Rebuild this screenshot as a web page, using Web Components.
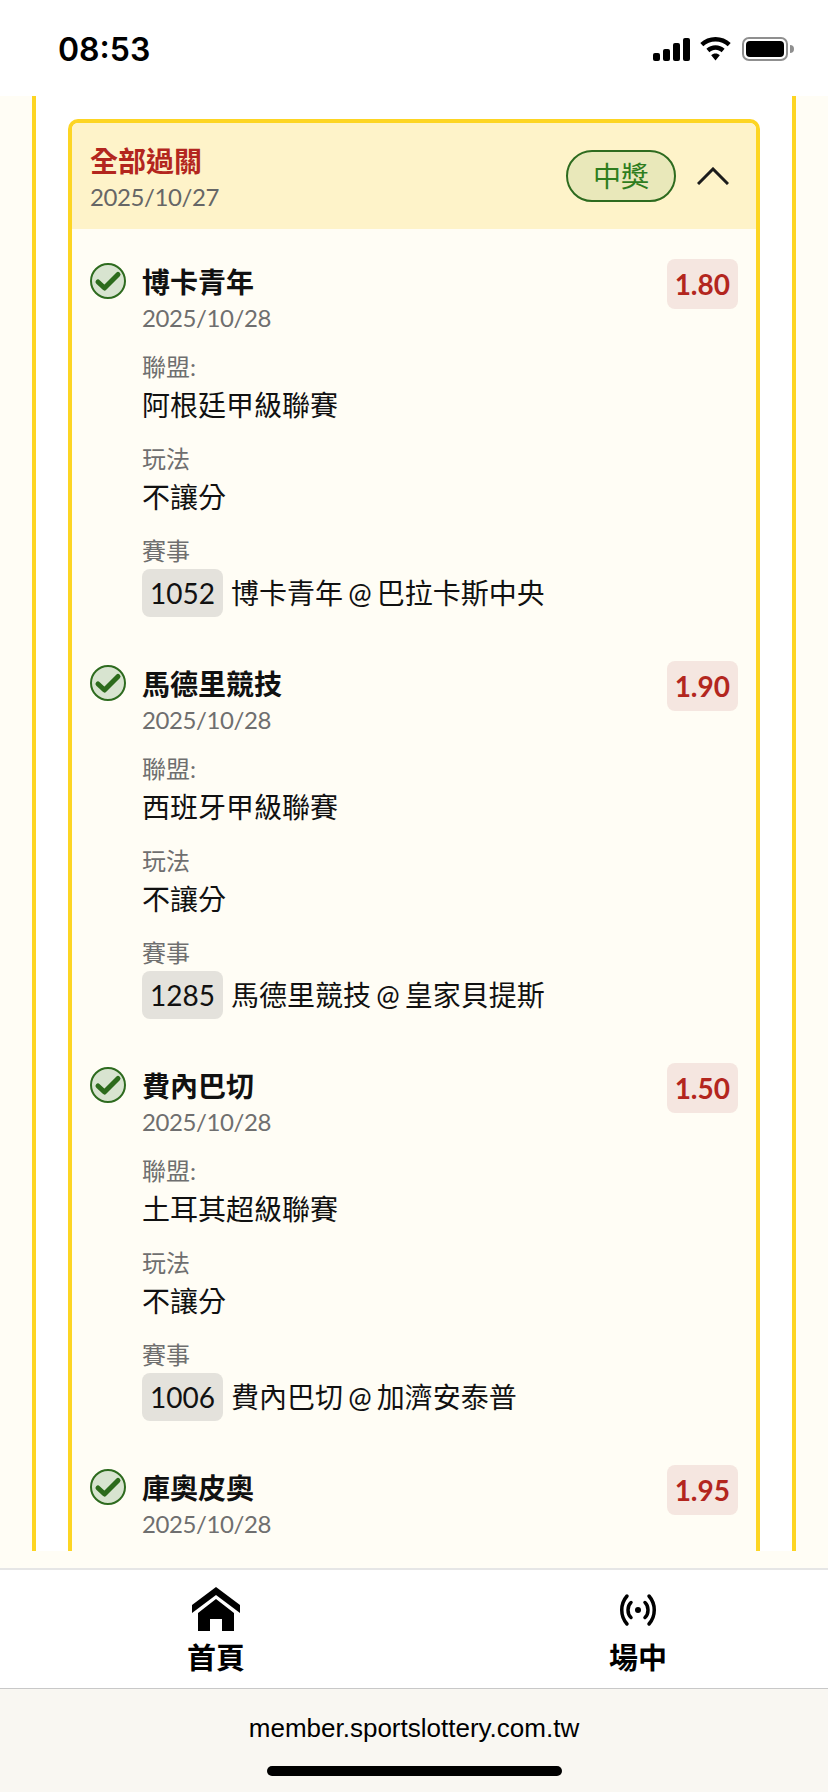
<!DOCTYPE html>
<html lang="zh-Hant"><head><meta charset="utf-8"><title>全部過關</title>
<style>
html,body{margin:0;padding:0}
body{width:828px;height:1792px;overflow:hidden;font-family:Lato,"Noto Sans CJK TC",sans-serif;color:#111;background:#fff}
app-shell{height:1792px}
</style></head><body>
<template id="t-shell"><style>:host{display:flex;flex-direction:column;width:828px}
main{flex:1;min-height:0;background:#fffdf5;display:flex;flex-direction:column;padding:0 32px 17px}
.panel{flex:1;min-height:0;overflow:hidden;background:#fff;border:solid #fdd523;border-width:0 4px;padding:23px 32px 0}
</style><status-bar></status-bar><main><div class="panel"><slot></slot></div></main><bottom-nav></bottom-nav><browser-bar></browser-bar></template>

<template id="t-status"><style>:host{display:flex;flex:none;height:96px;background:#fff;align-items:flex-start;justify-content:space-between;box-sizing:border-box;padding:31px 34px 0 58px}
.time{font:600 32px/38px Inter,sans-serif;color:#000;letter-spacing:0}
.icons{display:flex;align-items:center;gap:10px;margin-top:6px;height:24px}
svg{display:block}
.sig{display:flex;align-items:flex-end;gap:3px;height:23px}
.sig i{display:block;width:7px;background:#000;border-radius:2px}
.bat{display:flex;align-items:center;margin-left:1px}
.shell{box-sizing:border-box;width:46px;height:24px;border:2px solid #8f8f8f;border-radius:7px;padding:2px}
.fill{height:100%;background:#000;border-radius:4px}
.cap{width:4px;height:8px;background:#8f8f8f;border-radius:0 4px 4px 0;margin-left:2px}
</style><span class="time">08:53</span><div class="icons">
<div class="sig"><i style="height:8px"></i><i style="height:12px"></i><i style="height:18px"></i><i style="height:23px"></i></div>
<svg width="31" height="24" viewBox="0 0 31 24"><path d="M15.5 0C9.6 0 4.3 2.2.3 5.9l3 3.4c3.2-3 7.5-4.8 12.2-4.8s9 1.800 12.200 4.800l3-3.400C26.700 2.200 21.400 0 15.500 0zM15.500 8.200c-3.500 0-6.700 1.300-9.100 3.600l3 3.400c1.600-1.500 3.800-2.400 6.100-2.400s4.500.9 6.100 2.400l3-3.400c-2.400-2.300-5.600-3.600-9.100-3.600zM15.500 16.500c-1.700 0-3.200.6-4.300 1.700l4.300 5.300 4.300-5.300c-1.100-1.100-2.600-1.700-4.300-1.700z" fill="#000"/></svg>
<div class="bat"><div class="shell"><div class="fill"></div></div><div class="cap"></div></div>
</div></template>

<template id="t-card"><style>:host{display:block;box-sizing:border-box;width:692px;border:4px solid #fdd523;border-bottom:0;border-radius:10px 10px 0 0;background:#fffdf5;overflow:hidden}
header{height:106px;box-sizing:border-box;background:#fef3c9;display:flex;align-items:flex-start;justify-content:space-between;padding:20px 27px 0 18px}
.t{font-size:28px;font-weight:700;line-height:36px;color:#b3261e}
.d{font-size:24px;line-height:32px;color:#666;margin-top:2px;letter-spacing:-.4px}
.r{display:flex;align-items:center;gap:21px;margin-top:7px}
.pill{box-sizing:border-box;width:110px;height:52px;border:2px solid #2e6b1f;border-radius:26px;background:#e9e8ba;color:#2e7d1e;font-size:28px;line-height:48px;text-align:center}
svg{display:block}
.body{padding:0 18px 60px}
</style><header><div><div class="t"><slot name="title"></slot></div><div class="d"><slot name="date"></slot></div></div>
<div class="r"><div class="pill"><slot name="status"></slot></div><svg width="32" height="18" viewBox="0 0 32 18"><path d="M1 17 16 2l15 15" fill="none" stroke="#1c1c1c" stroke-width="3"/></svg></div></header>
<div class="body"><slot></slot></div></template>

<template id="t-leg"><style>:host{display:grid;grid-template-columns:36px 1fr auto;column-gap:16px;padding-top:30px;margin-bottom:14px;align-items:start}
svg{display:block;margin-top:4px}
.main{min-width:0}
.team{font-size:28px;font-weight:700;line-height:39px;margin-top:4px;color:#111}
.date{font-size:24px;line-height:32px;color:#6f6f6f;letter-spacing:-.4px}
.odds{box-sizing:border-box;height:50px;min-width:71px;padding:0 8px;border-radius:8px;background:#f5e6e0;color:#b3261e;font-size:28px;font-weight:700;line-height:50px;text-align:center}
.sec{margin-top:16px}
.sec.first{margin-top:17px}
.lab{font-size:24px;line-height:32px;color:#6f6f6f}
.val{font-size:28px;line-height:44px;color:#111}
.m{display:flex;align-items:center;gap:8px;margin-top:2px;font-size:28px;line-height:48px;word-spacing:-2px}
.code{box-sizing:border-box;width:81px;height:48px;border-radius:8px;background:#e4e2dc;text-align:center}
:host([short]) .sec{display:none}
</style><svg width="36" height="36" viewBox="0 0 36 36"><circle cx="18" cy="18" r="17" fill="#d8e4d0" stroke="#2e6b1f" stroke-width="2"/><path d="M8 19l6.500 6L28 11.500" fill="none" stroke="#2c6b1c" stroke-width="5" stroke-linecap="round" stroke-linejoin="round"/></svg>
<div class="main"><div class="team"><slot name="team"></slot></div><div class="date"><slot name="date"></slot></div>
<div class="sec first"><div class="lab">聯盟:</div><div class="val"><slot name="league"></slot></div></div>
<div class="sec"><div class="lab">玩法</div><div class="val"><slot name="play"></slot></div></div>
<div class="sec"><div class="lab">賽事</div><div class="m"><span class="code"><slot name="code"></slot></span><span><slot name="match"></slot></span></div></div>
</div><div class="odds"><slot name="odds"></slot></div></template>

<template id="t-nav"><style>:host{display:flex;gap:312px;flex:none;height:121px;box-sizing:border-box;padding-left:161px;background:#fff;border-top:2px solid #e6e6e6;border-bottom:1px solid #c8c8c8}
</style><nav-item label="首頁"><svg width="48" height="44" viewBox="0 0 48 44"><path d="M24 0 48 18v8L24 8 0 26v-8zM24 12l18 14v18H30V32H18v12H6V26z" fill="#000"/></svg></nav-item>
<nav-item label="場中"><svg width="48" height="44" viewBox="-6 -7 48 44"><g fill="none" stroke="#000" stroke-width="3.500" stroke-linecap="round"><path d="M7 2C0 10 0 22 7 30M11 8.500C7 12 7 20 11 23.500M29 2c7 8 7 20 0 28M25 8.500c4 3.500 4 11.500 0 15"/></g><circle cx="18" cy="16" r="3" fill="#000"/></svg></nav-item></template>
<template id="t-navitem"><style>:host{display:flex;flex-direction:column;align-items:center;width:110px;padding-top:17px}
::slotted(svg){display:block}
.l{font-size:29px;font-weight:700;line-height:40px;margin-top:7px;color:#000}
</style><slot></slot><div class="l"></div></template>

<template id="t-browser"><style>:host{display:flex;flex-direction:column;align-items:center;flex:none;height:103px;background:#f9f7f2}
.u{font:26px/30px "Liberation Sans",sans-serif;color:#000;margin-top:24px}
.h{width:295px;height:10px;border-radius:5px;background:#000;margin-top:23px}
</style><div class="u"><slot>member.sportslottery.com.tw</slot></div><div class="h"></div></template>

<app-shell>
<parlay-card>
<span slot="title">全部過關</span><span slot="date">2025/10/27</span><span slot="status">中獎</span>
<bet-leg><span slot="team">博卡青年</span><span slot="date">2025/10/28</span><span slot="league">阿根廷甲級聯賽</span><span slot="play">不讓分</span><span slot="code">1052</span><span slot="match">博卡青年 @ 巴拉卡斯中央</span><span slot="odds">1.80</span></bet-leg>
<bet-leg><span slot="team">馬德里競技</span><span slot="date">2025/10/28</span><span slot="league">西班牙甲級聯賽</span><span slot="play">不讓分</span><span slot="code">1285</span><span slot="match">馬德里競技 @ 皇家貝提斯</span><span slot="odds">1.90</span></bet-leg>
<bet-leg><span slot="team">費內巴切</span><span slot="date">2025/10/28</span><span slot="league">土耳其超級聯賽</span><span slot="play">不讓分</span><span slot="code">1006</span><span slot="match">費內巴切 @ 加濟安泰普</span><span slot="odds">1.50</span></bet-leg>
<bet-leg short><span slot="team">庫奧皮奧</span><span slot="date">2025/10/28</span><span slot="odds">1.95</span></bet-leg>
</parlay-card>
</app-shell>
<script>
function def(name,tpl,init){customElements.define(name,class extends HTMLElement{constructor(){super();this.attachShadow({mode:'open'}).appendChild(document.getElementById(tpl).content.cloneNode(true));}connectedCallback(){if(init)init(this);}});}
def('status-bar','t-status');def('parlay-card','t-card');def('bet-leg','t-leg');
def('nav-item','t-navitem',el=>{el.shadowRoot.querySelector('.l').textContent=el.getAttribute('label');});
def('bottom-nav','t-nav');def('browser-bar','t-browser');def('app-shell','t-shell');
</script>
</body></html>
